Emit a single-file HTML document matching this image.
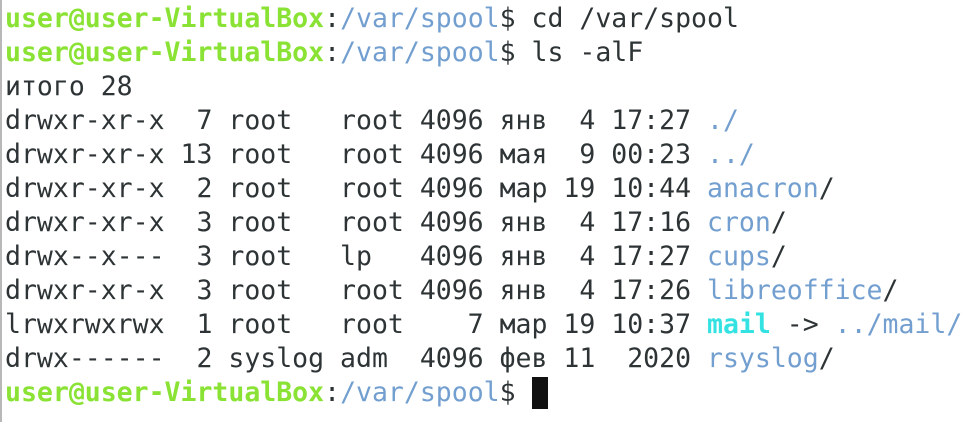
<!DOCTYPE html>
<html><head><meta charset="utf-8"><style>
html,body{margin:0;padding:0;background:#fff;width:976px;height:422px;overflow:hidden}
body{border-left:2px solid #b8b8b8;box-sizing:border-box}
pre{margin:0;padding:2px 0 0 3px;font-family:"DejaVu Sans Mono","Liberation Mono",monospace;font-size:26.5px;line-height:34px;color:#2e3436}
.g{color:#8ae234;font-weight:bold}
.b{color:#729fcf}
.c{color:#34e2e2;font-weight:bold}
.k{display:inline-block;width:16px;height:32px;background:#111;vertical-align:-8px}
</style></head><body><pre><span class="g">user@user-VirtualBox</span>:<span class="b">/var/spool</span>$ cd /var/spool
<span class="g">user@user-VirtualBox</span>:<span class="b">/var/spool</span>$ ls -alF
итого 28
drwxr-xr-x  7 root   root 4096 янв  4 17:27 <span class="b">./</span>
drwxr-xr-x 13 root   root 4096 мая  9 00:23 <span class="b">../</span>
drwxr-xr-x  2 root   root 4096 мар 19 10:44 <span class="b">anacron</span>/
drwxr-xr-x  3 root   root 4096 янв  4 17:16 <span class="b">cron</span>/
drwx--x---  3 root   lp   4096 янв  4 17:27 <span class="b">cups</span>/
drwxr-xr-x  3 root   root 4096 янв  4 17:26 <span class="b">libreoffice</span>/
lrwxrwxrwx  1 root   root    7 мар 19 10:37 <span class="c">mail</span> -&gt; <span class="b">../mail/</span>
drwx------  2 syslog adm  4096 фев 11  2020 <span class="b">rsyslog</span>/
<span class="g">user@user-VirtualBox</span>:<span class="b">/var/spool</span>$ <span class="k"></span></pre></body></html>
